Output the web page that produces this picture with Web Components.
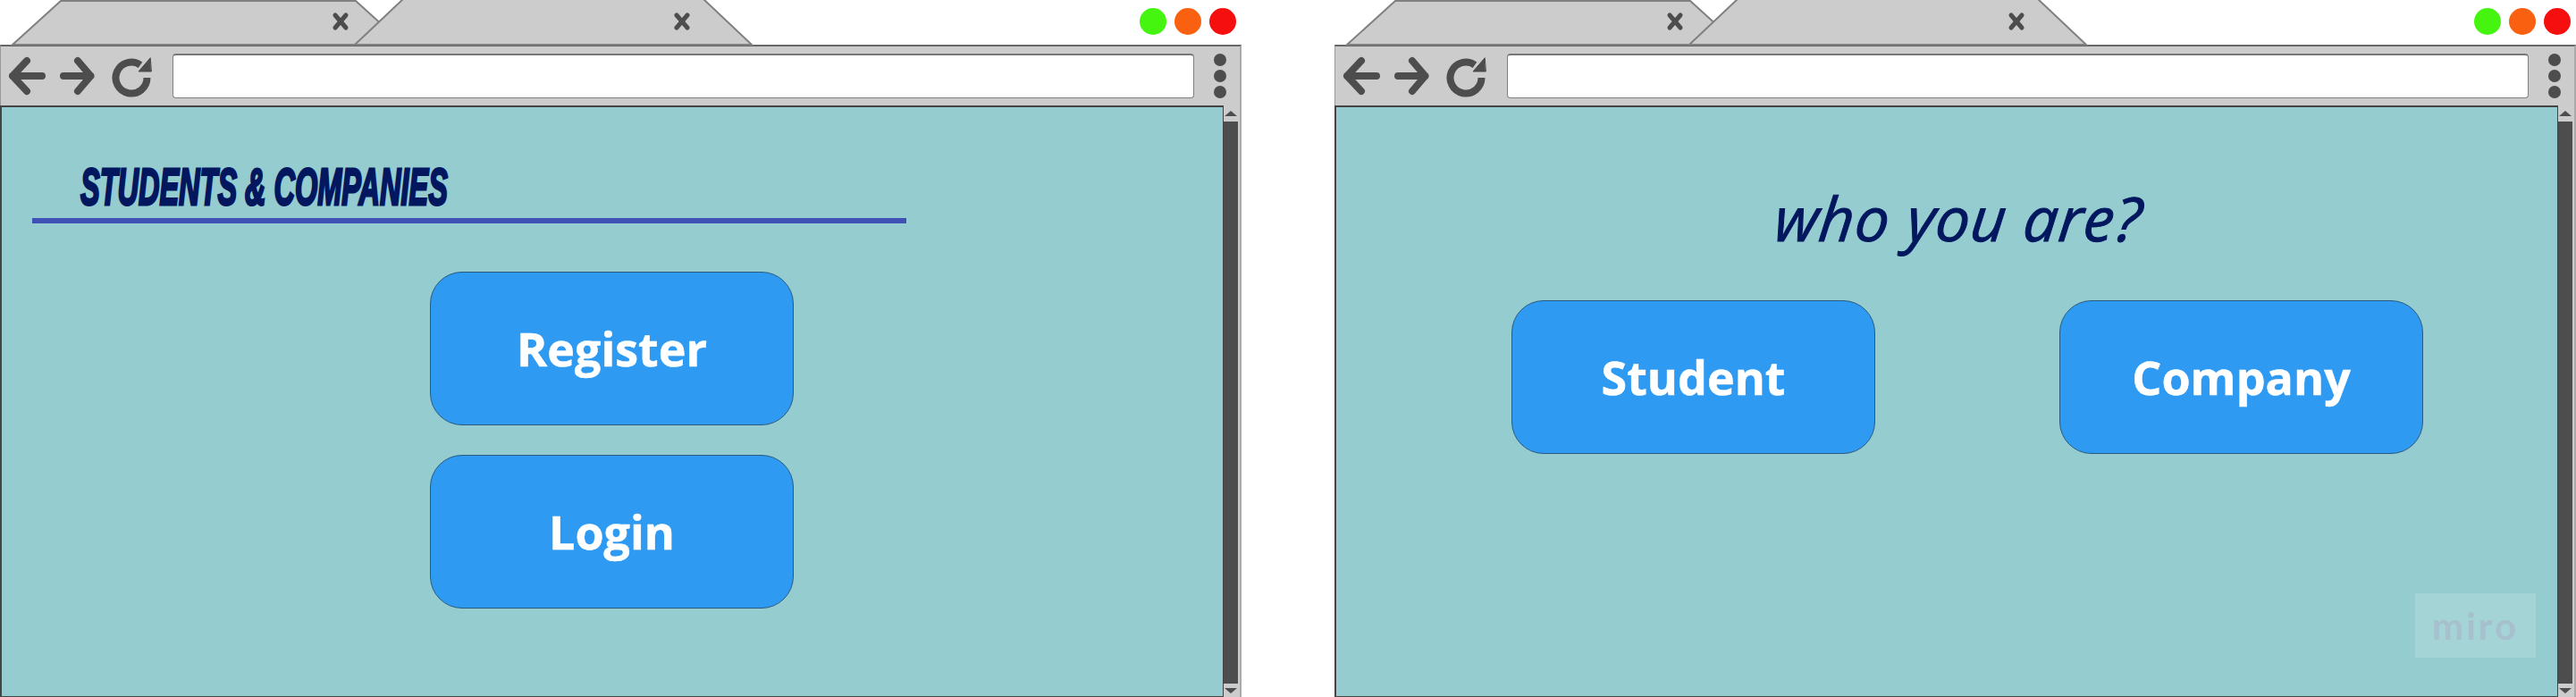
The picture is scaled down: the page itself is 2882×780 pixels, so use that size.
<!DOCTYPE html>
<html lang="en">
<head>
<meta charset="utf-8">
<title>Students & Companies</title>
<style>
  html, body { margin: 0; height: 100%; background: #fff; overflow: hidden; }
  body { font-family: "Open Sans", "Liberation Sans", sans-serif; }
  .desk { display: flex; gap: 104px; height: 780px; width: 2882px; }
</style>
</head>
<body>
<div class="desk">
  <browser-window>
    <landing-page></landing-page>
  </browser-window>
  <browser-window>
    <who-page></who-page>
    <miro-mark slot="overlay"></miro-mark>
  </browser-window>
</div>

<template id="tab-strip-tpl">
  <style>
    :host { display: flex; justify-content: flex-end; height: 50px; position: relative; }
    svg.tabs { position: absolute; left: 0; top: 0; }
    .lights { display: flex; gap: 9px; padding: 9px 6px 0 0; }
    .lights i { display: block; width: 30px; height: 30px; border-radius: 50%; }
  </style>
  <svg class="tabs" width="860" height="52" viewBox="0 0 860 52">
    <path d="M14 50 L68 1 H398 L452 50 Z" fill="#ccc" stroke="#808080" stroke-width="2"/>
    <path d="M397 50 L452 -2 H786 L841 50 Z" fill="#ccc" stroke="#808080" stroke-width="2"/>
    <path d="M375 17 L387 31 M387 17 L375 31" stroke="#4d4d4d" stroke-width="5" stroke-linecap="round"/>
    <path d="M757 17 L769 31 M769 17 L757 31" stroke="#4d4d4d" stroke-width="5" stroke-linecap="round"/>
  </svg>
  <div class="lights">
    <i style="background:#46f50f"></i>
    <i style="background:#f9600f"></i>
    <i style="background:#f50f0f"></i>
  </div>
</template>

<template id="nav-toolbar-tpl">
  <style>
    :host {
      display: flex; align-items: center; height: 68px; box-sizing: border-box;
      background: #ccc; border-top: 2px solid #666; border-left: 1px solid #999; border-right: 2px solid #aaa;
      padding: 0 0 0 8px;
    }
    svg { flex: none; display: block; }
    .addr {
      flex: 1; height: 50px; box-sizing: border-box; margin: 0 22px 0 16px;
      background: #fff; border: 1px solid #808080; border-top: 2px solid #777; border-radius: 4px;
    }
    .dots { display: flex; flex-direction: column; gap: 4px; margin-right: 15px; }
    .dots i { display: block; width: 14px; height: 14px; border-radius: 50%; background: #4d4d4d; }
  </style>
  <svg width="168" height="48" viewBox="0 0 168 48" fill="none" stroke="#4d4d4d" stroke-width="8" stroke-linecap="round" stroke-linejoin="round">
    <path d="M38 24 H5 M21 7 L5 24 L21 41"/>
    <path d="M62 24 H92.5 M78 7 L92.5 24 L78 41"/>
    <path d="M148 11.7 A17.5 17.5 0 1 0 155.5 26" stroke-linecap="butt" stroke-linejoin="miter"/>
    <path d="M159 4 L146 19 H160 Z" fill="#4d4d4d" stroke-width="1"/>
  </svg>
  <div class="addr"></div>
  <div class="dots"><i></i><i></i><i></i></div>
</template>

<template id="scroll-rail-tpl">
  <style>
    :host {
      display: flex; flex-direction: column; width: 20px; background: #ccc;
      box-sizing: border-box; border-right: 2px solid #aaa;
    }
    .btn { height: 18px; display: flex; align-items: center; justify-content: center; padding-right: 2px; }
    .btn i { display: block; width: 0; height: 0; border-left: 7px solid transparent; border-right: 7px solid transparent; }
    .up i { border-bottom: 6px solid #4d4d4d; }
    .down i { border-top: 6px solid #4d4d4d; }
    .thumb { flex: 1; background: #4d4d4d; margin-right: 2px; }
    .down { height: 15px; }
  </style>
  <div class="btn up"><i></i></div>
  <div class="thumb"></div>
  <div class="btn down"><i></i></div>
</template>

<template id="browser-window-tpl">
  <style>
    :host { display: flex; flex-direction: column; width: 1389px; height: 780px; flex: none; }
    .body { flex: 1; min-height: 0; display: flex; }
    .view {
      flex: 1; min-width: 0; position: relative; box-sizing: border-box; background: #94cccf;
      border: 2px solid #444; border-right-width: 1px; border-bottom-width: 1px;
    }
  </style>
  <tab-strip></tab-strip>
  <nav-toolbar></nav-toolbar>
  <div class="body">
    <div class="view"><slot></slot></div>
    <scroll-rail></scroll-rail>
  </div>
  <slot name="overlay"></slot>
</template>

<template id="action-button-tpl">
  <style>
    :host {
      display: flex; align-items: center; justify-content: center;
      width: 407px; height: 172px; box-sizing: border-box; flex: none;
      background: #2e9af2; border: 1px solid #2b5a80; border-radius: 36px;
      color: #fff; font: 700 52px/1 "Open Sans", "Liberation Sans", sans-serif;
      -webkit-text-stroke: .5px #fff;
    }
  </style>
  <slot></slot>
</template>

<template id="landing-page-tpl">
  <style>
    :host { display: flex; flex-direction: column; }
    h1 {
      margin: 0; padding: 0 0 3px 88px; height: 124px; box-sizing: border-box;
      display: flex; align-items: flex-end;
    }
    h1 span {
      display: block; transform: scaleX(.56); transform-origin: left center;
      color: #03175f; font: italic 700 58px/64px "Liberation Sans", sans-serif;
      -webkit-text-stroke: 3px #03175f; text-transform: uppercase; white-space: nowrap;
    }
    .rule { height: 6px; width: 978px; margin-left: 34px; background: #3f51b5; }
    .stack { display: flex; flex-direction: column; align-items: center; gap: 33px; margin: 54px 0 0 479px; width: 407px; }
  </style>
  <h1><span>Students &amp; Companies</span></h1>
  <div class="rule"></div>
  <div class="stack">
    <action-button>Register</action-button>
    <action-button>Login</action-button>
  </div>
</template>

<template id="who-page-tpl">
  <style>
    :host { display: flex; flex-direction: column; align-items: center; }
    h2 {
      margin: 74px 0 0; height: 142px; box-sizing: border-box; padding-left: 22px;
      color: #03175f; font: italic 400 68px/100px "Open Sans", sans-serif;
      letter-spacing: 1px; -webkit-text-stroke: 1px #03175f;
      transform: skewX(-6deg); white-space: nowrap;
    }
    .row { display: flex; justify-content: space-between; width: 1020px; margin-left: 46px; }
  </style>
  <h2>who you are?</h2>
  <div class="row">
    <action-button>Student</action-button>
    <action-button>Company</action-button>
  </div>
</template>

<template id="miro-mark-tpl">
  <style>
    :host {
      position: absolute; left: 2702px; top: 664px; width: 135px; height: 72px;
      display: flex; align-items: center; justify-content: center;
      background: rgba(255, 255, 255, .16); color: #a6c1cd;
      font: 700 42px/1 "Lato", "Open Sans", sans-serif; letter-spacing: 3px;
    }
  </style>
  <slot>miro</slot>
</template>

<script>
  // every element just stamps its template into an open shadow root
  class Stamped extends HTMLElement {
    constructor() {
      super();
      const tpl = document.getElementById(this.constructor.tpl);
      this.attachShadow({ mode: "open" }).appendChild(tpl.content.cloneNode(true));
    }
  }

  const elements = {
    "tab-strip": "tab-strip-tpl",
    "nav-toolbar": "nav-toolbar-tpl",
    "scroll-rail": "scroll-rail-tpl",
    "browser-window": "browser-window-tpl",
    "action-button": "action-button-tpl",
    "landing-page": "landing-page-tpl",
    "who-page": "who-page-tpl",
    "miro-mark": "miro-mark-tpl",
  };

  for (const [name, tpl] of Object.entries(elements)) {
    customElements.define(name, class extends Stamped {
      static tpl = tpl;
    });
  }
</script>
</body>
</html>
